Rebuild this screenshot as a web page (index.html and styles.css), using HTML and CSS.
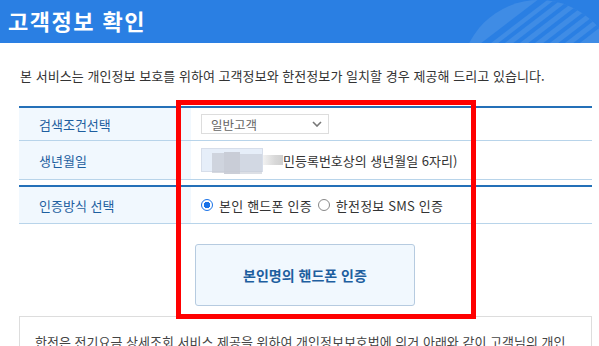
FILE: index.html
```html
<!DOCTYPE html>
<html lang="ko">
<head>
<meta charset="utf-8">
<link rel="stylesheet" href="styles.css">
</head>
<body>
<div class="header">
  <h1 class="title">고객정보 확인</h1>
  <svg class="deco" width="160" height="43" viewBox="0 0 160 43">
    <defs>
      <clipPath id="c"><circle cx="100" cy="78" r="78"/></clipPath>
    </defs>
    <circle cx="100" cy="78" r="78" fill="#ffffff" fill-opacity="0.1"/>
    <g clip-path="url(#c)" stroke="#2a7fe3" stroke-width="4">
      <line x1="60" y1="45" x2="125" y2="-5"/>
      <line x1="75" y1="45" x2="140" y2="-5"/>
      <line x1="90" y1="45" x2="155" y2="-5"/>
      <line x1="105" y1="45" x2="170" y2="-5"/>
      <line x1="120" y1="45" x2="185" y2="-5"/>
      <line x1="135" y1="45" x2="200" y2="-5"/>
    </g>
    <line x1="38" y1="50" x2="110" y2="-5" stroke="#2a7fe3" stroke-width="6"/>
  </svg>
</div>
<div class="content">
  <p class="intro">본 서비스는 개인정보 보호를 위하여 고객정보와 한전정보가 일치할 경우 제공해 드리고 있습니다.</p>
  <div class="tbl">
    <div class="row r1">
      <div class="label">검색조건선택</div>
      <div class="value">
        <div class="select"><span>일반고객</span>
          <svg class="chev" width="10" height="6" viewBox="0 0 10 6"><path d="M1 1 L5 5 L9 1" fill="none" stroke="#777" stroke-width="1.6"/></svg>
        </div>
      </div>
    </div>
    <div class="row r2">
      <div class="label">생년월일</div>
      <div class="value">
        <div class="birth"><span class="b1"></span><span class="b2"></span><span class="b3"></span></div>
        <span class="blurtail"></span><span class="hint">민등록번호상의 생년월일 6자리)</span>
      </div>
    </div>
  </div>
  <div class="tbl tbl2">
    <div class="row r3">
      <div class="label">인증방식 선택</div>
      <div class="value">
        <span class="radio on"></span><span class="rlabel">본인 핸드폰 인증</span>
        <span class="radio"></span><span class="rlabel">한전정보 SMS 인증</span>
      </div>
    </div>
  </div>
  <div class="btnwrap"><div class="btn">본인명의 핸드폰 인증</div></div>
  <div class="notice">한전은 전기요금 상세조회 서비스 제공을 위하여 개인정보보호법에 의거 아래와 같이 고객님의 개인</div>
</div>
<div class="redbox"></div>
</body>
</html>
```
FILE: styles.css
```css
html, body { margin: 0; padding: 0; }
body {
  width: 599px; height: 346px; overflow: hidden; position: relative;
  font-family: "Noto Sans CJK KR", "Noto Sans", sans-serif;
  color: #333; background: #fff;
}
.header {
  height: 43px; background: #2a7fe3; position: relative;
  display: flex; align-items: center; padding-left: 8px;
}
.title { margin: 0; color: #fff; font-size: 22px; font-weight: 700; letter-spacing: 1.5px; line-height: 1; margin-top: -3px; }
.deco { position: absolute; right: 0; top: 0; }
.content { padding: 0 7px 0 19px; }
.intro { margin: 0; padding: 26px 0 0 1px; height: 40px; box-sizing: border-box; font-size: 13px; line-height: 14px; color: #333; letter-spacing: 0.05px; white-space: nowrap; }
.tbl { margin-top: 23px; border-top: 2px solid #2470b8; }
.tbl2 { margin-top: 5px; }
.row { display: flex; border-bottom: 1px solid #b8d4ea; }
.label { width: 152px; flex: none; background: #f1f8fe; color: #1e5f9f; font-size: 13px; padding-left: 20px; display: flex; align-items: center; }
.value { flex: 1; display: flex; align-items: center; padding-left: 10px; font-size: 13px; color: #333; }
.r1 { height: 32px; }
.r2 { height: 38px; }
.r3 { height: 36px; }
.select { width: 128px; height: 20px; border: 1px solid #ddd; box-sizing: border-box; display: flex; align-items: center; justify-content: space-between; padding: 0 6px 0 9px; color: #666; font-size: 12.5px; }
.birth { width: 62px; height: 24px; background: #e6eef9; border: 1px solid #d7deea; box-sizing: border-box; position: relative; }
.birth span { position: absolute; background: #c5c9d3; }
.b1 { left: 10px; top: 4px; width: 12px; height: 20px; opacity: .7; }
.b2 { left: 22px; top: 3px; width: 16px; height: 22px; opacity: .9; }
.b3 { left: 38px; top: 5px; width: 22px; height: 20px; opacity: .6; }
.blurtail { width: 20px; height: 10px; background: linear-gradient(90deg, #f2f2f2, #d8d8d8 60%, #cfcfcf); }
.hint { font-size: 13px; color: #333; letter-spacing: 0; }
.radio { width: 12px; height: 12px; border-radius: 50%; border: 1.5px solid #888; box-sizing: border-box; margin-right: 6px; flex: none; }
.radio.on { border: 1.5px solid #1a73e8; background: radial-gradient(circle, #1a73e8 0 3px, #fff 3.5px); }
.rlabel { margin-right: 6px; font-size: 13px; letter-spacing: 0.2px; }
.btnwrap { padding: 20px 0 0 176px; }
.btn { width: 220px; height: 62px; box-sizing: border-box; border: 1px solid #b6cbe0; border-radius: 3px; background: #f1f8fe; display: flex; align-items: center; justify-content: center; color: #1e5f9f; font-weight: 700; font-size: 14px; }
.notice { margin-top: 10px; border: 1px solid #ddd; height: 40px; padding: 15px 0 0 15px; box-sizing: border-box; font-size: 13px; color: #444; white-space: nowrap; overflow: hidden; }
.redbox { position: absolute; left: 176px; top: 100px; width: 300px; height: 219px; border: 5px solid #ff0000; box-sizing: border-box; }
```
